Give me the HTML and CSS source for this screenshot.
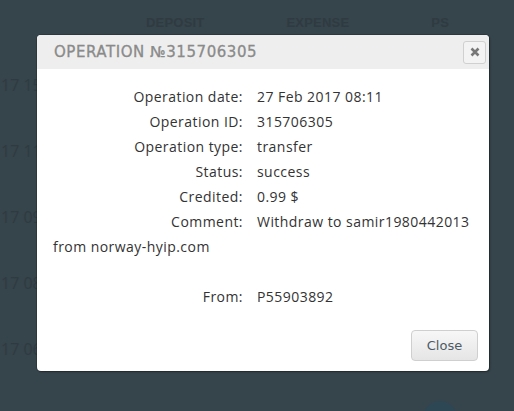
FILE: index.html
```html
<!DOCTYPE html>
<html>
<head>
<meta charset="utf-8">
<link rel="stylesheet" href="styles.css">
</head>
<body>
<div class="page">
  <div class="thead">
    <span class="th th-dep">DEPOSIT</span>
    <span class="th th-exp">EXPENSE</span>
    <span class="th th-ps">PS</span>
  </div>
  <div class="rows">
    <div class="bg-row">17 15:4</div>
    <div class="bg-row">17 11:3</div>
    <div class="bg-row">17 09:1</div>
    <div class="bg-row">17 08:1</div>
    <div class="bg-row">17 06:1</div>
  </div>
  <div class="fab"></div>
</div>
<div class="overlay">
  <div class="modal">
    <div class="modal-header">
      <h3 class="modal-title">OPERATION №315706305</h3>
      <button class="x-btn" aria-label="close">
        <svg width="10" height="10" viewBox="0 0 10 10"><path d="M1.5 1.5 L8.5 8.5 M8.5 1.5 L1.5 8.5" stroke="#777" stroke-width="2.6" stroke-linecap="butt"/></svg>
      </button>
    </div>
    <div class="modal-body">
      <div class="line"><span class="lbl">Operation date:</span><span class="val">27 Feb 2017 08:11</span></div>
      <div class="line"><span class="lbl">Operation ID:</span><span class="val">315706305</span></div>
      <div class="line"><span class="lbl">Operation type:</span><span class="val">transfer</span></div>
      <div class="line"><span class="lbl">Status:</span><span class="val">success</span></div>
      <div class="line"><span class="lbl">Credited:</span><span class="val">0.99 $</span></div>
      <div class="line"><span class="lbl">Comment:</span><span class="val">Withdraw to samir1980442013</span></div>
      <div class="line">from norway-hyip.com</div>
      <div class="line blank"></div>
      <div class="line"><span class="lbl">From:</span><span class="val">P55903892</span></div>
    </div>
    <div class="modal-footer">
      <button class="close-btn">Close</button>
    </div>
  </div>
</div>
</body>
</html>
```
FILE: styles.css
```css
html, body {
  margin: 0;
  padding: 0;
}
body {
  width: 514px;
  height: 411px;
  overflow: hidden;
  background: #36444b;
  font-family: "Open Sans", sans-serif;
  position: relative;
}
.page {
  height: 411px;
  position: relative;
  overflow: hidden;
}
.thead {
  display: flex;
  padding-top: 15px;
  height: 19px;
  font-family: "Liberation Sans", sans-serif;
  font-weight: bold;
  font-size: 13px;
  letter-spacing: 0.2px;
  color: #2f3b41;
}
.th-dep { margin-left: 146px; }
.th-exp { margin-left: 82px; }
.th-ps { margin-left: 82px; }
.rows {
  display: flex;
  flex-direction: column;
  padding-top: 41px;
  gap: 45px;
}
.bg-row {
  padding-left: 1px;
  font-size: 16px;
  line-height: 21px;
  color: #2f3b41;
}
.fab {
  position: absolute;
  left: 423px;
  top: 401px;
  width: 34px;
  height: 34px;
  border-radius: 50%;
  background: #2d4754;
}
.overlay {
  position: absolute;
  left: 37px;
  top: 35px;
}
.modal {
  width: 452px;
  background: #fff;
  border-radius: 4px;
  box-shadow: 0 0 0 1px rgba(0,0,0,0.15), 1px 1px 2px rgba(0,0,0,0.3);
  overflow: hidden;
}
.modal-header {
  display: flex;
  align-items: center;
  justify-content: space-between;
  height: 34px;
  background: #eeeeee;
  padding: 0 3px 0 17px;
}
.modal-title {
  margin: 0;
  font-family: "DejaVu Sans", sans-serif;
  font-weight: normal;
  font-size: 15px;
  letter-spacing: 0.55px;
  color: #8a8a8a;
  -webkit-text-stroke: 0.3px #8a8a8a;
}
.x-btn {
  width: 23px;
  height: 23px;
  padding: 0;
  border: 1px solid #d0d0d0;
  border-radius: 3px;
  background: #f3f3f3;
  display: flex;
  align-items: center;
  justify-content: center;
}
.modal-body {
  padding: 15px 16px 0 16px;
  font-size: 14px;
  line-height: 25px;
  letter-spacing: 0.45px;
  color: #333;
}
.line {
  height: 25px;
  white-space: nowrap;
}
.lbl {
  display: inline-block;
  width: 190px;
  text-align: right;
}
.val {
  margin-left: 14px;
}
.modal-footer {
  display: flex;
  justify-content: flex-end;
  padding: 21px 11px 10px 0;
}
.close-btn {
  width: 67px;
  height: 31px;
  border: 1px solid #cfcfcf;
  border-radius: 4px;
  background: linear-gradient(#f7f7f7, #e5e5e5);
  font-family: "DejaVu Sans", sans-serif;
  font-size: 13px;
  color: #4e5a66;
  padding: 0;
}
```
